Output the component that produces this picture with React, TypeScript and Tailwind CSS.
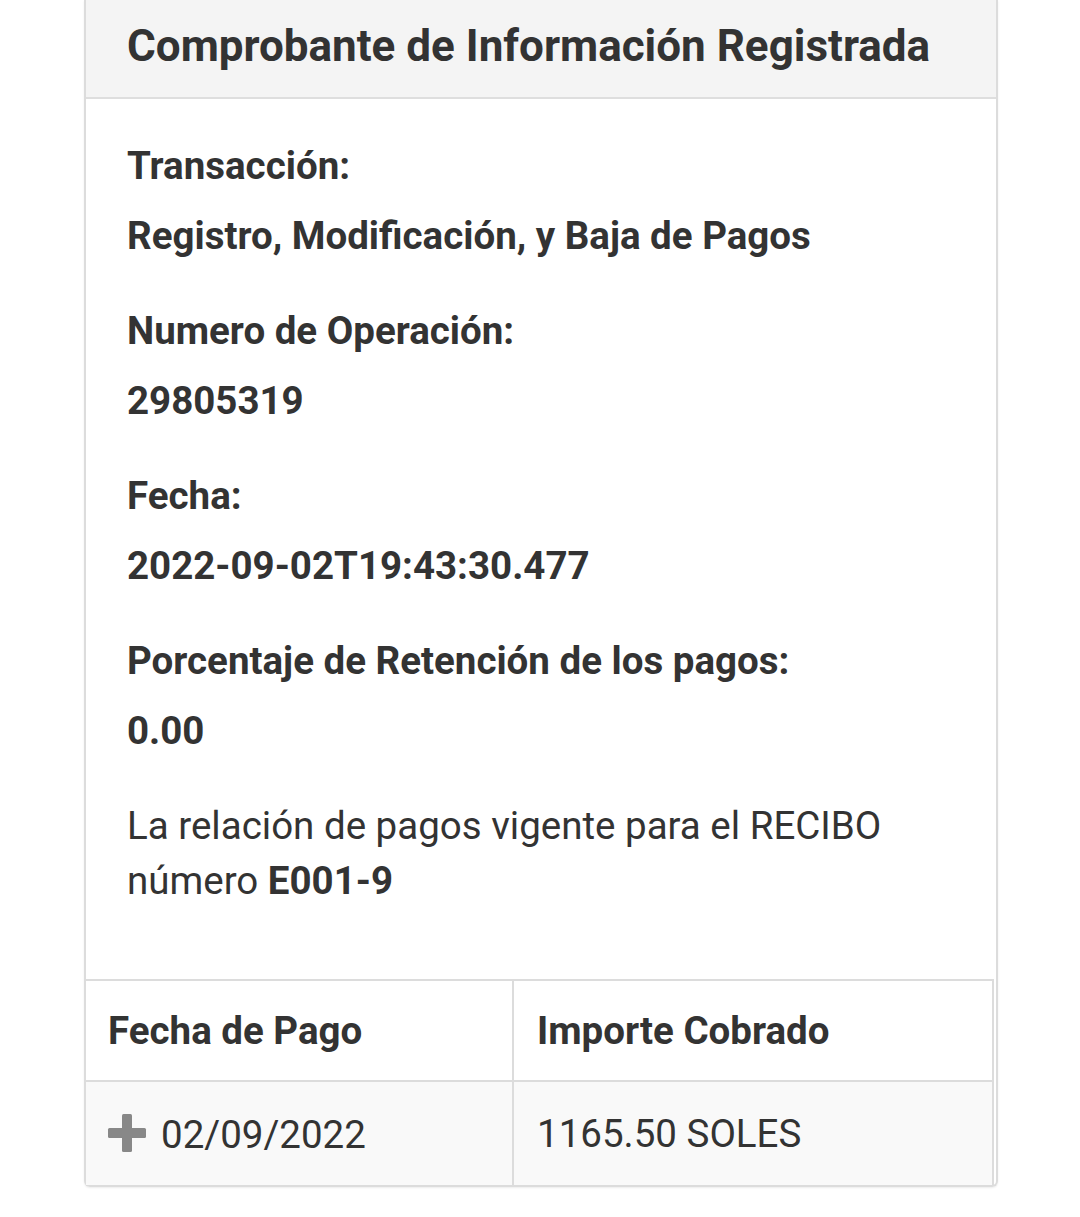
import React from "react";

const Item = ({ label, value }: { label: string; value: string }) => (
  <div className="mb-[40px]">
    <p className="font-bold leading-[55px]">{label}</p>
    <p className="mt-[15px] font-bold leading-[55px]">{value}</p>
  </div>
);

export default function App() {
  return (
    <div
      className="w-[1080px] h-[1217px] bg-white text-[#333]"
      style={{ fontFamily: "Roboto, 'Liberation Sans', sans-serif" }}
    >
      <div className="ml-[84px] w-[914px] border-x-2 border-b-2 border-[#dcdcdc] rounded-b-[6px] shadow-[0_1px_2px_rgba(0,0,0,0.08)]">
        <div className="h-[99px] bg-[#f4f4f4] border-b-2 border-[#dedede] pl-[41px] flex items-center">
          <h1 className="text-[44px] font-bold leading-none pb-[6px]">
            Comprobante de Información Registrada
          </h1>
        </div>
        <div className="pl-[41px] pr-[40px] pt-[39px] pb-[71px] text-[38.5px]">
          <Item label="Transacción:" value="Registro, Modificación, y Baja de Pagos" />
          <Item label="Numero de Operación:" value="29805319" />
          <Item label="Fecha:" value="2022-09-02T19:43:30.477" />
          <Item label="Porcentaje de Retención de los pagos:" value="0.00" />
          <p className="leading-[55px]">
            La relación de pagos vigente para el RECIBO número <span className="font-bold">E001-9</span>
          </p>
        </div>
        <div className="mr-[2px] border-t-2 border-r-2 border-[#dcdcdc] grid grid-cols-[428px_1fr] text-[38.5px]">
          <div className="h-[101px] flex items-center pl-[22px] font-bold border-r-2 border-[#dcdcdc] border-b-2">
            Fecha de Pago
          </div>
          <div className="h-[101px] flex items-center pl-[23px] font-bold border-b-2 border-[#dcdcdc]">
            Importe Cobrado
          </div>
          <div className="h-[103px] flex items-center pl-[21px] bg-[#f9f9f9] border-r-2 border-[#dcdcdc]">
            <svg width="40" height="40" viewBox="0 0 40 40" className="mr-[14px] -mt-[2px]">
              <rect x="15" y="1" width="10" height="38" rx="1.5" fill="#888" />
              <rect x="1" y="15" width="38" height="10" rx="1.5" fill="#888" />
            </svg>
            <span className="mt-[2px]">02/09/2022</span>
          </div>
          <div className="h-[103px] flex items-center pl-[23px] bg-[#f9f9f9]">
            1165.50 SOLES
          </div>
        </div>
      </div>
    </div>
  );
}
